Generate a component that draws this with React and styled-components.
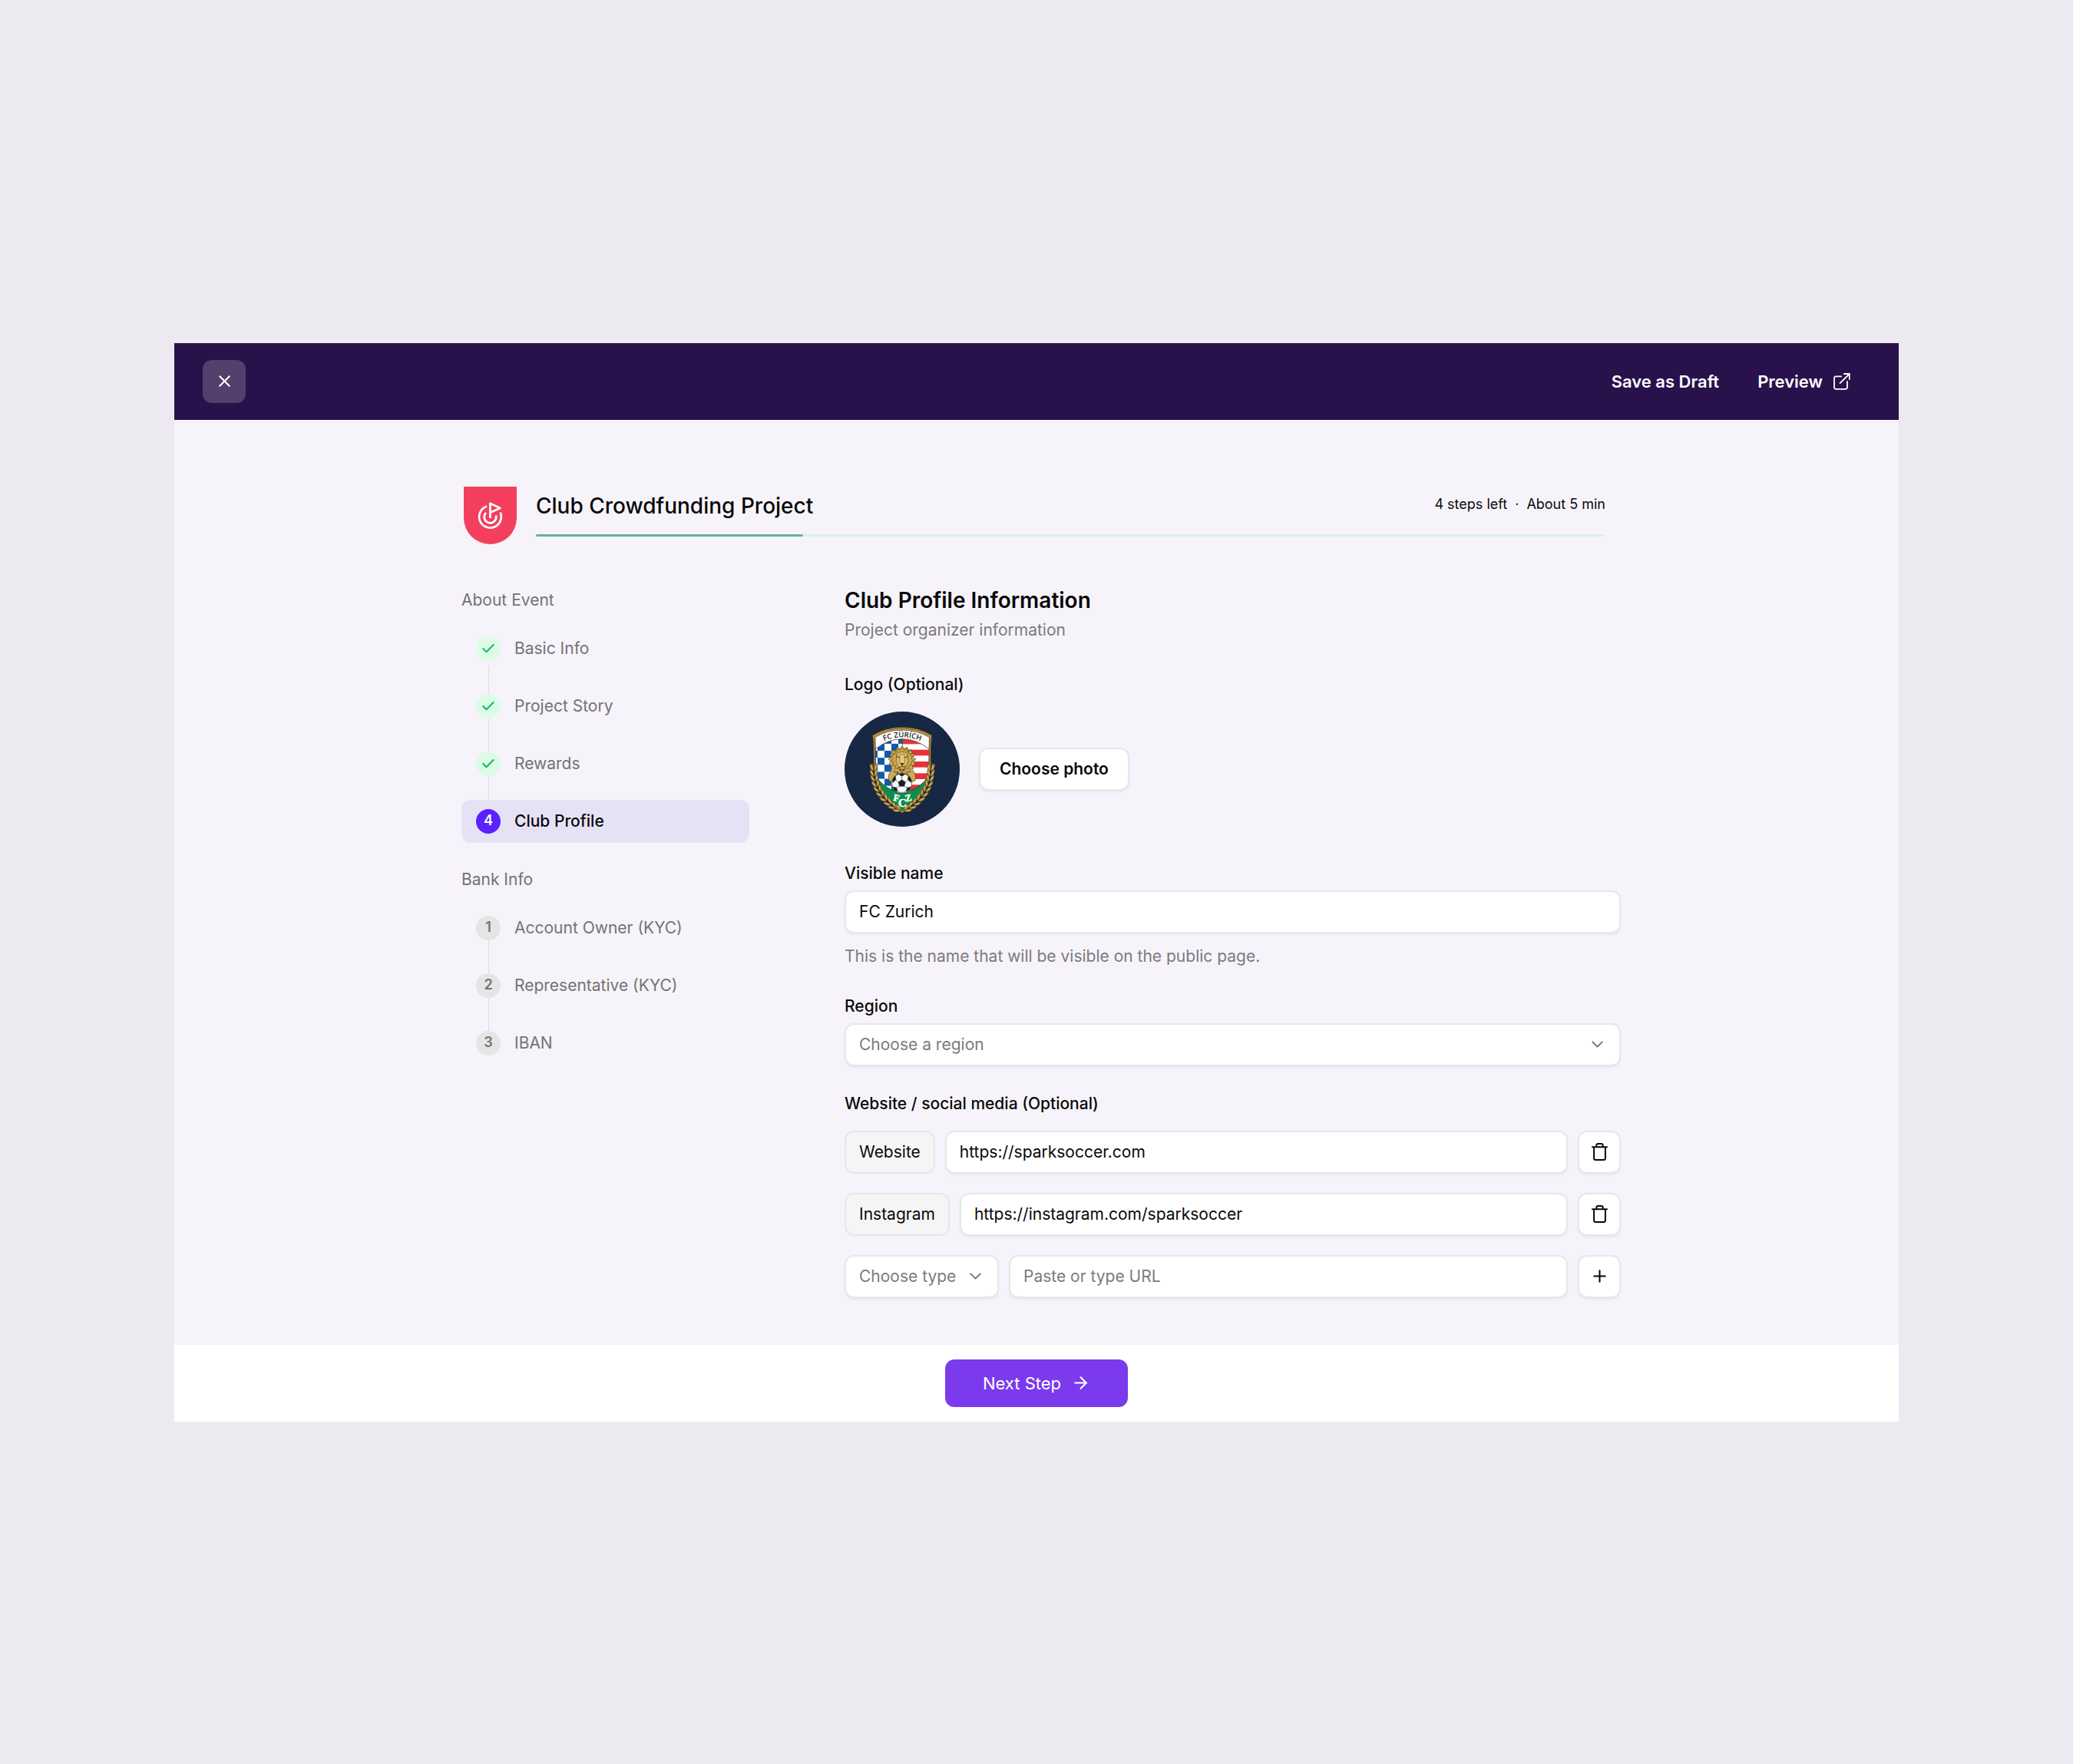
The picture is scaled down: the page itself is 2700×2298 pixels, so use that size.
import React, { useId } from "react";
import styled, { createGlobalStyle, css } from "styled-components";
import { X, Check, ChevronDown, Plus, ArrowRight } from "lucide-react";

const GlobalStyle = createGlobalStyle`
  *, *::before, *::after { box-sizing: border-box; }
  body { margin: 0; background: #ece9f0; }
  body, button, input, select {
    font-family: Inter, "Liberation Sans", sans-serif;
    font-size: 21px;
    line-height: 32px;
    color: #09090b;
  }
  h1, h2, h3, p, ol { margin: 0; padding: 0; }
`;

const Page = styled.div`
  min-height: 100vh;
  display: flex;
  align-items: center;
  justify-content: center;
  padding: 48px;
`;

const Panel = styled.div`
  width: 100%;
  max-width: 2246px;
  background: #f6f4fa;
`;

const TopBar = styled.header`
  display: flex;
  align-items: center;
  justify-content: space-between;
  height: 100px;
  padding: 0 38px 0 37px;
  background: #29114b;
`;

const CloseButton = styled.button`
  display: grid;
  place-items: center;
  width: 56px;
  height: 56px;
  border: 0;
  border-radius: 12px;
  background: #54406d;
  color: #fff;
`;

const TopActions = styled.div`
  display: flex;
`;

const TopAction = styled.button`
  display: flex;
  align-items: center;
  gap: 14px;
  height: 56px;
  padding: 0 25px;
  border: 0;
  background: transparent;
  color: #fff;
  font-size: 22px;
  font-weight: 600;
`;

const Body = styled.main`
  display: flex;
  flex-direction: column;
  gap: 57px;
  padding: 87px 362px 61px 374px;
`;

const ProjectHeader = styled.div`
  display: flex;
  align-items: center;
  gap: 22px;
  padding-right: 20px;
`;

const BadgeFrame = styled.div`
  display: grid;
  place-items: center;
  width: 75px;
  height: 75px;
`;

const ProjectInfo = styled.div`
  flex: 1;
  display: flex;
  flex-direction: column;
  gap: 21px;
`;

const ProjectLine = styled.div`
  display: flex;
  align-items: flex-start;
  justify-content: space-between;
`;

const ProjectTitle = styled.h1`
  font-size: 28px;
  line-height: 32px;
  font-weight: 500;
`;

const Remaining = styled.p`
  display: flex;
  gap: 10px;
  font-size: 18px;
  line-height: 28px;
`;

const Track = styled.div`
  height: 3px;
  border-radius: 2px;
  background: #dfeeee;
`;

const TrackFill = styled.div`
  height: 3px;
  border-radius: 2px;
  background: #62b39c;
`;

const Columns = styled.div`
  display: flex;
  align-items: flex-start;
  gap: 124px;
`;

const Sidebar = styled.nav`
  flex: none;
  width: 375px;
  display: flex;
  flex-direction: column;
  gap: 32px;
`;

const StepGroup = styled.section`
  display: flex;
  flex-direction: column;
  gap: 19px;
`;

const GroupTitle = styled.h3`
  font-size: 21px;
  line-height: 32px;
  font-weight: 400;
  color: #737373;
`;

const StepList = styled.ol`
  list-style: none;
`;

const lineStyle = css`
  width: 1px;
  background: #dedce1;
`;

const Connector = styled.div`
  ${lineStyle}
  height: 19px;
  margin-left: 35px;
`;

const StepLink = styled.a`
  display: flex;
  align-items: center;
  gap: 18px;
  height: 56px;
  padding: 0 19px;
  border-radius: 12px;
  text-decoration: none;
  color: ${(p) => (p.$active ? "#09090b" : "#737373")};
  font-weight: ${(p) => (p.$active ? 500 : 400)};
  background: ${(p) => (p.$active ? "#e6e2f5" : "transparent")};
`;

const Marker = styled.span`
  display: flex;
  flex-direction: column;
  align-items: center;
  align-self: stretch;
  width: 32px;
`;

const MarkerLine = styled.span`
  ${lineStyle}
  flex: none;
  height: ${(p) => (p.$detached ? "6px" : "12px")};
  margin-top: ${(p) => (p.$detached ? "6px" : "0")};
  visibility: ${(p) => (p.$hidden ? "hidden" : "visible")};
`;

const tones = {
  done: css`background: #dcfce7; color: #22b866;`,
  current: css`background: #5b21ff; color: #fff;`,
  todo: css`background: #e5e5e5; color: #737373;`,
};

const Dot = styled.span`
  flex: none;
  display: flex;
  align-items: center;
  justify-content: center;
  width: 32px;
  height: 32px;
  padding-bottom: ${(p) => (p.$tone === "done" ? "0" : "2px")};
  border-radius: 50%;
  font-size: 18px;
  line-height: 28px;
  font-weight: 600;
  ${(p) => tones[p.$tone]}
`;

const Form = styled.form`
  flex: 1;
  min-width: 0;
  display: flex;
  flex-direction: column;
  gap: 33px;
`;

const Intro = styled.div`
  display: flex;
  flex-direction: column;
  gap: 7px;
  margin-bottom: 6px;
`;

const FormTitle = styled.h2`
  font-size: 28px;
  line-height: 32px;
  font-weight: 600;
`;

const Muted = styled.p`
  color: #7b7a7e;
`;

const Field = styled.div`
  display: flex;
  flex-direction: column;
  gap: ${(p) => (p.$loose ? "19px" : "6px")};
`;

const LogoField = styled(Field)`
  margin-bottom: 12px;
`;

const Label = styled.label`
  font-weight: 500;
`;

const LabelText = styled.span`
  font-weight: 500;
`;

const Hint = styled(Muted)`
  margin-top: 8px;
`;

const PhotoRow = styled.div`
  display: flex;
  align-items: center;
  gap: 25px;
`;

const surface = css`
  height: 56px;
  border: 2px solid #e8e6ea;
  border-radius: 12px;
  background: #fff;
  box-shadow: 0 2px 3px rgba(0, 0, 0, 0.05);
`;

const OutlineButton = styled.button`
  ${surface}
  padding: 0 25px;
  font-weight: 600;
`;

const IconButton = styled.button`
  ${surface}
  flex: none;
  display: grid;
  place-items: center;
  width: 56px;
  padding: 0;
`;

const TextInput = styled.input`
  ${surface}
  flex: 1;
  width: 100%;
  min-width: 0;
  min-height: 56px;
  padding: 0 17px;
  &::placeholder { color: #7b7a7e; opacity: 1; }
`;

const SelectBox = styled.div`
  flex: none;
  display: grid;
  align-items: center;
  color: #737373;
  & > * { grid-area: 1 / 1; }
  & > svg { justify-self: end; margin-right: 18px; pointer-events: none; }
`;

const Select = styled.select`
  ${surface}
  appearance: none;
  width: 100%;
  padding: 0 53px 0 17px;
  color: #7b7a7e;
`;

const Links = styled.div`
  display: flex;
  flex-direction: column;
  gap: 25px;
`;

const LinkRow = styled.div`
  display: flex;
  gap: 13px;
`;

const TypeTag = styled.label`
  ${surface}
  flex: none;
  display: flex;
  align-items: center;
  padding: 0 17px;
  background: #f5f5f5;
  box-shadow: none;
`;

const Footer = styled.footer`
  display: grid;
  place-items: center;
  height: 100px;
  background: #fff;
`;

const NextButton = styled.button`
  display: flex;
  align-items: center;
  gap: 13px;
  height: 62px;
  padding: 0 49px;
  border: 0;
  border-radius: 12px;
  background: #7c3aed;
  color: #fff;
  font-size: 22px;
`;

const ExternalIcon = () => (
  <svg width="22" height="22" viewBox="0 0 22 22" fill="none" stroke="currentColor" strokeWidth="1.8" strokeLinecap="round" strokeLinejoin="round" aria-hidden="true">
    <path d="M10.2 4.4H3.2a2.2 2.2 0 0 0-2.2 2.2v12a2.2 2.2 0 0 0 2.2 2.2h12.6a2.2 2.2 0 0 0 2.2-2.2V11" />
    <path d="M8.6 13.2 20.8 1M13.8 1h7v7" />
  </svg>
);

const TrashIcon = () => (
  <svg width="25" height="25" viewBox="0 0 25 25" fill="none" stroke="currentColor" strokeWidth="2" strokeLinecap="round" strokeLinejoin="round" aria-hidden="true">
    <path d="M3 6.3h19M5.1 6.3v14.6a2 2 0 0 0 2 2h10.8a2 2 0 0 0 2-2V6.3" />
    <path d="M8.3 6V4.4a2.3 2.3 0 0 1 2.3-2.3h3.8a2.3 2.3 0 0 1 2.3 2.3V6" />
  </svg>
);

const ProjectBadge = () => (
  <svg width="69" height="75" viewBox="0 0 69 75" fill="none" aria-hidden="true">
    <path d="M0 0h69v40.5a34.5 34.5 0 0 1-69 0z" fill="#f43f5e" />
    <g stroke="#fff" strokeWidth="2.7" strokeLinecap="round" strokeLinejoin="round">
      <path d="M29 26a14.3 14.3 0 1 0 19 8.6" />
      <path d="M28.2 34.8a7.8 7.8 0 1 0 14 3.8" />
      <path d="M34.4 40V21.8l12.9 6.1-12.9 5.8" />
    </g>
  </svg>
);

const GOLD = "#cfa850";
const DARK = "#33260f";

const burst = (cx, cy, rx, ry, depth, count) =>
  Array.from({ length: count * 2 }, (_, i) => {
    const a = (Math.PI * i) / count - Math.PI / 2;
    const k = i % 2 ? depth : 1;
    return `${(cx + Math.cos(a) * rx * k).toFixed(1)},${(cy + Math.sin(a) * ry * k).toFixed(1)}`;
  }).join(" ");

const wreath = [
  [145, 240, -4], [146, 261, -6], [149, 282, -10], [154, 303, -16], [162, 323, -24],
  [173, 342, -32], [187, 360, -40], [203, 376, -48], [220, 390, -54], [238, 401, -62],
];

const WreathSide = () => (
  <g fill={GOLD} stroke={DARK} strokeWidth="1.4">
    <path d="M138 222q-8 14 0 28 9-12 0-28z" />
    {wreath.map(([x, y, r]) => (
      <g key={y} transform={`translate(${x} ${y}) rotate(${r})`}>
        <path d="M-1 14Q-18 6-14-16 0-7-1 14z" />
        <path d="M1 14Q18 6 12-16 0-7 1 14z" />
      </g>
    ))}
  </g>
);

const cells = [];
for (let c = -1; c < 4; c++)
  for (let r = -3; r < 6; r++)
    if ((c + r) % 2 !== 0) cells.push([160 + c * 27, 174 + r * 27.4]);

const ClubCrest = () => {
  const id = useId();
  return (
    <svg width="150" height="150" viewBox="31 21 450 450" role="img" aria-label="FC Zürich crest">
      <defs>
        <clipPath id={`${id}f`}>
          <path d="M151 168Q200 128 256 128T362 168L361 245Q352 330 256 408 160 330 151 245z" />
        </clipPath>
        <clipPath id={`${id}h`}><path d="M140 100h117v260H140z" /></clipPath>
        <path id={`${id}t`} d="M172 142Q256 100 342 142" />
      </defs>
      <circle cx="256" cy="246" r="225" fill="#162844" />
      <path d="M140 114Q192 82 256 82T373 114Q367 140 368 240 354 345 256 418 158 345 145 240 146 140 140 114z" fill={GOLD} stroke={DARK} strokeWidth="2" />
      <path d="M145 117Q196 87 256 87T368 117Q362 142 363 240 350 340 256 412 162 340 150 240 151 142 145 117z" fill="none" stroke={DARK} strokeWidth="1.6" />
      <path d="M151 121Q200 93 256 93T362 121L360 240Q348 335 256 408 164 335 153 240z" fill="#fff" stroke={DARK} strokeWidth="2" />
      <g clipPath={`url(#${id}f)`}>
        <g clipPath={`url(#${id}h)`} fill="#1459a8">
          {cells.map(([x, y]) => <rect key={`${x}-${y}`} x={x} y={y} width="27" height="27.4" />)}
        </g>
        <g fill="#e6333b">
          {[125, 170, 216, 262, 307].map((y) => <rect key={y} x="257" y={y} width="110" height="23" />)}
        </g>
        <path d="M257 125v60" stroke={DARK} strokeWidth="2" />
        <path d="M150 272Q196 332 256 338 316 332 362 272V420H150z" fill="#07904a" stroke={DARK} strokeWidth="2" />
      </g>
      <path d="M151 168Q200 128 256 128T362 168" fill="none" stroke={DARK} strokeWidth="2" />
      <text fontFamily="Open Sans, Noto Sans, sans-serif" fontSize="29" fontWeight="600" fill="#1c1c1c">
        <textPath href={`#${id}t`} startOffset="50%" textAnchor="middle">FC ZÜRÍCH</textPath>
      </text>
      <WreathSide />
      <g transform="translate(513 0) scale(-1 1)"><WreathSide /></g>
      <g stroke={DARK} strokeWidth="1.6" fill={GOLD}>
        <path d="M214 250q-16 18-10 40 12 10 24-2l10-30zM297 250q16 18 10 40-12 10-24-2l-10-30z" />
        <polygon points={burst(256, 212, 54, 56, 0.84, 17)} />
        <polygon points={burst(256, 208, 43, 45, 0.82, 15)} />
        <circle cx="223" cy="180" r="7" />
        <circle cx="288" cy="180" r="7" />
        <path d="M236 184q20-12 40 0l4 32q-8 26-24 32-16-6-24-32z" fill="#dcb964" />
        <path d="M248 188l-3 34 11 8 11-8-3-34z" fill="#e6c87c" strokeWidth="1.2" />
      </g>
      <g stroke={DARK} strokeWidth="2.6" fill="none" strokeLinecap="round">
        <path d="M234 196l12 5M278 196l-12 5M256 228v7M243 240q7 0 13-5 6 5 13 0" />
      </g>
      <path d="M248 222h16l-8 8z" fill={DARK} />
      <path d="M246 246q10 8 20 0l-10 16z" fill="#b68d3a" stroke={DARK} strokeWidth="1.4" />
      <circle cx="255" cy="302" r="39" fill="#fafafa" stroke="#1b1b1b" strokeWidth="2" />
      <g fill="#1b1b1b" stroke="#1b1b1b" strokeWidth="1.6">
        <path d="M255 287l14 10-5 16h-18l-5-16z" />
        <path d="M243 266q12-5 24 0l-12 8zM218 290q3-12 11-18l3 14-11 12zM292 290q-3-12-11-18l-3 14 11 12zM227 327l-7-11 13 2 6 14q-7 0-12-5zM283 327l7-11-13 2-6 14q7 0 12-5z" />
        <path d="M255 287v-13M269 297l11-10M264 313l13 6M246 313l-13 6M241 297l-11-10M239 332l8 5h16l8-5" fill="none" />
      </g>
      <g fontFamily="Liberation Serif, serif" fontWeight="700" fill="#fff" stroke="#fff" strokeWidth="1.4" textAnchor="middle">
        <text x="231" y="371" fontSize="38" transform="rotate(12 231 371)">F</text>
        <text x="257" y="393" fontSize="46">C</text>
        <text x="283" y="371" fontSize="38" transform="rotate(-12 283 371)">Z</text>
      </g>
    </svg>
  );
};

const groups = [
  {
    title: "About Event",
    steps: [
      { label: "Basic Info", tone: "done" },
      { label: "Project Story", tone: "done" },
      { label: "Rewards", tone: "done" },
      { label: "Club Profile", tone: "current" },
    ],
  },
  {
    title: "Bank Info",
    steps: [
      { label: "Account Owner (KYC)", tone: "todo" },
      { label: "Representative (KYC)", tone: "todo" },
      { label: "IBAN", tone: "todo" },
    ],
  },
];

const links = [
  { type: "Website", url: "https://sparksoccer.com" },
  { type: "Instagram", url: "https://instagram.com/sparksoccer" },
];

const Step = ({ step, index, last }) => {
  const active = step.tone === "current";
  return (
    <li>
      {index > 0 && <Connector />}
      <StepLink href="#" $active={active} aria-current={active ? "step" : undefined}>
        <Marker>
          <MarkerLine $hidden={index === 0 || active} />
          <Dot $tone={step.tone}>
            {step.tone === "done" ? <Check size={20} strokeWidth={2.6} /> : index + 1}
          </Dot>
          <MarkerLine $hidden={last} $detached={index === 0 && step.tone === "done"} />
        </Marker>
        {step.label}
      </StepLink>
    </li>
  );
};

export default function App() {
  const progress = 25;
  return (
    <>
      <GlobalStyle />
      <Page>
        <Panel>
          <TopBar>
            <CloseButton aria-label="Close"><X size={25} strokeWidth={2} /></CloseButton>
            <TopActions>
              <TopAction>Save as Draft</TopAction>
              <TopAction>Preview <ExternalIcon /></TopAction>
            </TopActions>
          </TopBar>
          <Body>
            <ProjectHeader>
              <BadgeFrame><ProjectBadge /></BadgeFrame>
              <ProjectInfo>
                <ProjectLine>
                  <ProjectTitle>Club Crowdfunding Project</ProjectTitle>
                  <Remaining><span>4 steps left</span><span>·</span><span>About 5 min</span></Remaining>
                </ProjectLine>
                <Track role="progressbar" aria-label="Progress" aria-valuenow={progress}>
                  <TrackFill style={{ width: `${progress}%` }} />
                </Track>
              </ProjectInfo>
            </ProjectHeader>
            <Columns>
              <Sidebar aria-label="Steps">
                {groups.map((g) => (
                  <StepGroup key={g.title}>
                    <GroupTitle>{g.title}</GroupTitle>
                    <StepList>
                      {g.steps.map((s, i) => (
                        <Step key={s.label} step={s} index={i} last={i === g.steps.length - 1} />
                      ))}
                    </StepList>
                  </StepGroup>
                ))}
              </Sidebar>
              <Form onSubmit={(e) => e.preventDefault()}>
                <Intro>
                  <FormTitle>Club Profile Information</FormTitle>
                  <Muted>Project organizer information</Muted>
                </Intro>
                <LogoField $loose>
                  <LabelText>Logo (Optional)</LabelText>
                  <PhotoRow>
                    <ClubCrest />
                    <OutlineButton type="button">Choose photo</OutlineButton>
                  </PhotoRow>
                </LogoField>
                <Field>
                  <Label htmlFor="name">Visible name</Label>
                  <TextInput id="name" defaultValue="FC Zurich" />
                  <Hint>This is the name that will be visible on the public page.</Hint>
                </Field>
                <Field>
                  <Label htmlFor="region">Region</Label>
                  <SelectBox>
                    <Select id="region" defaultValue="">
                      <option value="">Choose a region</option>
                    </Select>
                    <ChevronDown size={25} strokeWidth={1.8} />
                  </SelectBox>
                </Field>
                <Field $loose>
                  <LabelText>Website / social media (Optional)</LabelText>
                  <Links>
                    {links.map((l) => (
                      <LinkRow key={l.type}>
                        <TypeTag htmlFor={l.type}>{l.type}</TypeTag>
                        <TextInput id={l.type} defaultValue={l.url} />
                        <IconButton type="button" aria-label={`Remove ${l.type}`}><TrashIcon /></IconButton>
                      </LinkRow>
                    ))}
                    <LinkRow>
                      <SelectBox>
                        <Select aria-label="Link type" defaultValue="">
                          <option value="">Choose type</option>
                        </Select>
                        <ChevronDown size={25} strokeWidth={1.8} />
                      </SelectBox>
                      <TextInput aria-label="Link URL" placeholder="Paste or type URL" />
                      <IconButton type="button" aria-label="Add link"><Plus size={25} strokeWidth={2} /></IconButton>
                    </LinkRow>
                  </Links>
                </Field>
              </Form>
            </Columns>
          </Body>
          <Footer>
            <NextButton>Next Step <ArrowRight size={25} strokeWidth={2} /></NextButton>
          </Footer>
        </Panel>
      </Page>
    </>
  );
}
